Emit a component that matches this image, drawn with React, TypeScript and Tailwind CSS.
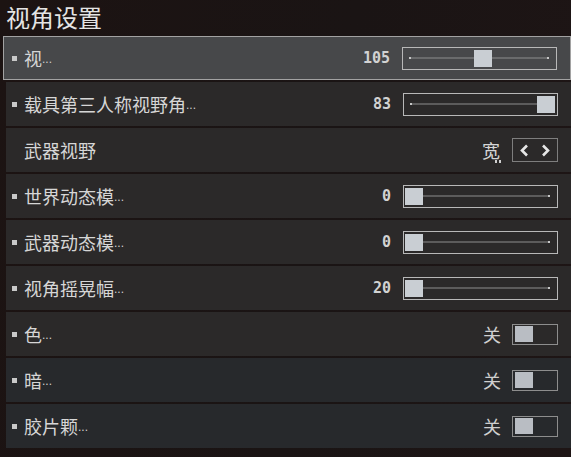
import { ReactNode } from 'react';

type Row =
  | { kind: 'slider'; label: string; value: string; pos: number; bullet?: boolean }
  | { kind: 'toggle'; label: string; value: string; bullet?: boolean }
  | { kind: 'choice'; label: string; value: string; bullet?: boolean };

const ROWS: Row[] = [
  { kind: 'slider', label: '视', value: '105', pos: 70, bullet: true },
  { kind: 'slider', label: '载具第三人称视野角', value: '83', pos: 132, bullet: true },
  { kind: 'choice', label: '武器视野', value: '宽' },
  { kind: 'slider', label: '世界动态模', value: '0', pos: 0, bullet: true },
  { kind: 'slider', label: '武器动态模', value: '0', pos: 0, bullet: true },
  { kind: 'slider', label: '视角摇晃幅', value: '20', pos: 0, bullet: true },
  { kind: 'toggle', label: '色', value: '关', bullet: true },
  { kind: 'toggle', label: '暗', value: '关', bullet: true },
  { kind: 'toggle', label: '胶片颗', value: '关', bullet: true },
];

const CJK = "font-['Noto_Sans_CJK_SC',sans-serif]";

function Slider({ value, pos }: { value: string; pos: number }) {
  return (
    <div className="flex items-center">
      <span className="mr-[12px] font-['DejaVu_Sans_Mono',monospace] text-[15px] font-bold text-[#d2d2d2]">
        {value}
      </span>
      <div className="relative h-[23px] w-[155px] border border-[#b8b8b8]">
        <div className="absolute left-[7px] right-[8px] top-1/2 h-px -translate-y-1/2 bg-[#8e8e8e]" />
        <div className="absolute left-[6px] top-1/2 h-[2px] w-[2px] -translate-y-1/2 bg-[#c8c8c8]" />
        <div className="absolute right-[7px] top-1/2 h-[2px] w-[2px] -translate-y-1/2 bg-[#c8c8c8]" />
        <div
          className="absolute top-[2px] h-[17px] w-[18px] bg-[#c9ced3]"
          style={{ left: 1 + pos }}
        />
      </div>
    </div>
  );
}

function Toggle({ value }: { value: string }) {
  return (
    <div className="flex items-center">
      <span className={`mr-[11px] text-[18px] leading-[24px] text-[#cfcfcf] ${CJK}`}>{value}</span>
      <div className="flex h-[21px] w-[46px] items-center border border-[#8d8d8d] pl-[2px]">
        <div className="h-[16px] w-[18px] bg-[#b9bdc3]" />
      </div>
    </div>
  );
}

function Chevron({ flip }: { flip?: boolean }) {
  return (
    <svg width="9" height="13" viewBox="0 0 9 13" className={flip ? 'scale-x-[-1]' : ''}>
      <polyline points="7,1.5 2,6.5 7,11.5" fill="none" stroke="#e6e6e6" strokeWidth="2.6" />
    </svg>
  );
}

function Choice({ value }: { value: string }) {
  return (
    <div className="flex items-center">
      <span className={`relative mr-[12px] text-[18px] leading-[24px] text-[#d6d6d6] ${CJK}`}>
        {value}
        <span className="absolute -bottom-[1px] -right-[1px] flex gap-[2px]">
          <span className="h-[3px] w-[2px] bg-[#d0d0d0]" />
          <span className="h-[3px] w-[2px] bg-[#d0d0d0]" />
        </span>
      </span>
      <div className="flex h-[24px] w-[46px] items-center justify-between border border-[#7e7e7e] pl-[7px] pr-[7px]">
        <Chevron />
        <Chevron flip />
      </div>
    </div>
  );
}

function SettingRow({ row, selected, cool }: { row: Row; selected: boolean; cool: boolean }) {
  let control: ReactNode = null;
  if (row.kind === 'slider') control = <Slider value={row.value} pos={row.pos} />;
  if (row.kind === 'toggle') control = <Toggle value={row.value} />;
  if (row.kind === 'choice') control = <Choice value={row.value} />;

  return (
    <div
      className={`flex h-[44px] items-center justify-between pr-[13px] ${
        selected
          ? '-ml-[3px] border border-[#a2a2a2] bg-[#47484a] pl-[8px]'
          : cool
            ? 'bg-[#27292c] pl-[6px]'
            : 'bg-[#2b2929] pl-[6px]'
      }`}
    >
      <div className="flex items-center">
        {row.bullet ? (
          <span className="mr-[7px] h-[5px] w-[5px] bg-[#c9c9c9]" />
        ) : (
          <span className="w-[12px]" />
        )}
        <span className={`text-[18px] leading-[24px] text-[#d6d6d6] ${CJK}`}>{row.label}</span>
        {row.bullet && (
          <span className="mb-[5px] self-end font-['Liberation_Sans',sans-serif] text-[12px] leading-none text-[#cfcfcf]">
            ...
          </span>
        )}
      </div>
      {control}
    </div>
  );
}

export default function App() {
  return (
    <div className="h-[457px] w-[571px] overflow-hidden bg-[linear-gradient(100deg,#1c1312,#1a1414_55%,#1e1515)]">
      <div className={`pl-[6px] text-[24px] leading-[34px] text-[#e4e4e4] ${CJK}`}>
        视角设置
      </div>
      <div className="mt-[2px] flex flex-col gap-[2px] pl-[6px]">
        {ROWS.map((row, i) => (
          <SettingRow key={row.label} row={row} selected={i === 0} cool={i >= 7} />
        ))}
      </div>
    </div>
  );
}
